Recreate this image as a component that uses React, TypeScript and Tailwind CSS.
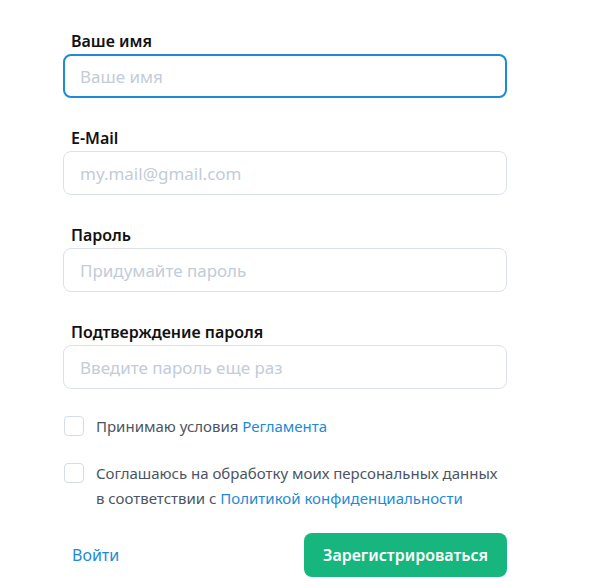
import React from "react";

const font = { fontFamily: '"Noto Sans", "Open Sans", sans-serif' };

type FieldProps = { label: string; placeholder: string; type?: string; focused?: boolean };

function Field({ label, placeholder, type = "text", focused }: FieldProps) {
  return (
    <div className="flex flex-col">
      <label className="ml-2 mb-px h-6 text-base font-semibold leading-6 text-[#111]">{label}</label>
      <input
        type={type}
        placeholder={placeholder}
        autoFocus={focused}
        className={`h-11 w-full rounded-lg bg-white px-4 text-[17px] text-[#222] outline-none placeholder:text-[#c3ccd8] ${
          focused ? "border-2 border-[#1b8bd6] px-[15px]" : "border border-[#dbe1ea]"
        }`}
      />
    </div>
  );
}

function Check({ children }: { children: React.ReactNode }) {
  return (
    <label className="flex items-start gap-3 text-[15px] leading-[25px] text-[#4b5563]">
      <span className="mt-[2px] h-5 w-5 shrink-0 rounded-[4px] border border-[#d5dce6] bg-white" />
      <span>{children}</span>
    </label>
  );
}

export default function App() {
  return (
    <div className="min-h-screen bg-white" style={font}>
      <form className="flex w-[444px] flex-col pt-[29px] ml-[63px]" onSubmit={(e) => e.preventDefault()}>
        <div className="flex flex-col gap-7">
          <Field label="Ваше имя" placeholder="Ваше имя" focused />
          <Field label="E-Mail" placeholder="my.mail@gmail.com" type="email" />
          <Field label="Пароль" placeholder="Придумайте пароль" type="password" />
          <Field label="Подтверждение пароля" placeholder="Введите пароль еще раз" type="password" />
        </div>

        <div className="mt-[25px] flex flex-col gap-[22px] pl-px">
          <Check>
            Принимаю условия <a className="text-[#1b8bd6]">Регламента</a>
          </Check>
          <Check>
            Соглашаюсь на обработку моих персональных данных
            <br />в соответствии с <a className="text-[#1b8bd6]">Политикой конфиденциальности</a>
          </Check>
        </div>

        <div className="mt-[22px] flex items-center justify-between">
          <a className="ml-[9px] text-base text-[#1b8bd6]">Войти</a>
          <button className="h-11 w-[203px] rounded-lg bg-[#17b67e] text-base font-semibold text-white">
            Зарегистрироваться
          </button>
        </div>
      </form>
    </div>
  );
}
